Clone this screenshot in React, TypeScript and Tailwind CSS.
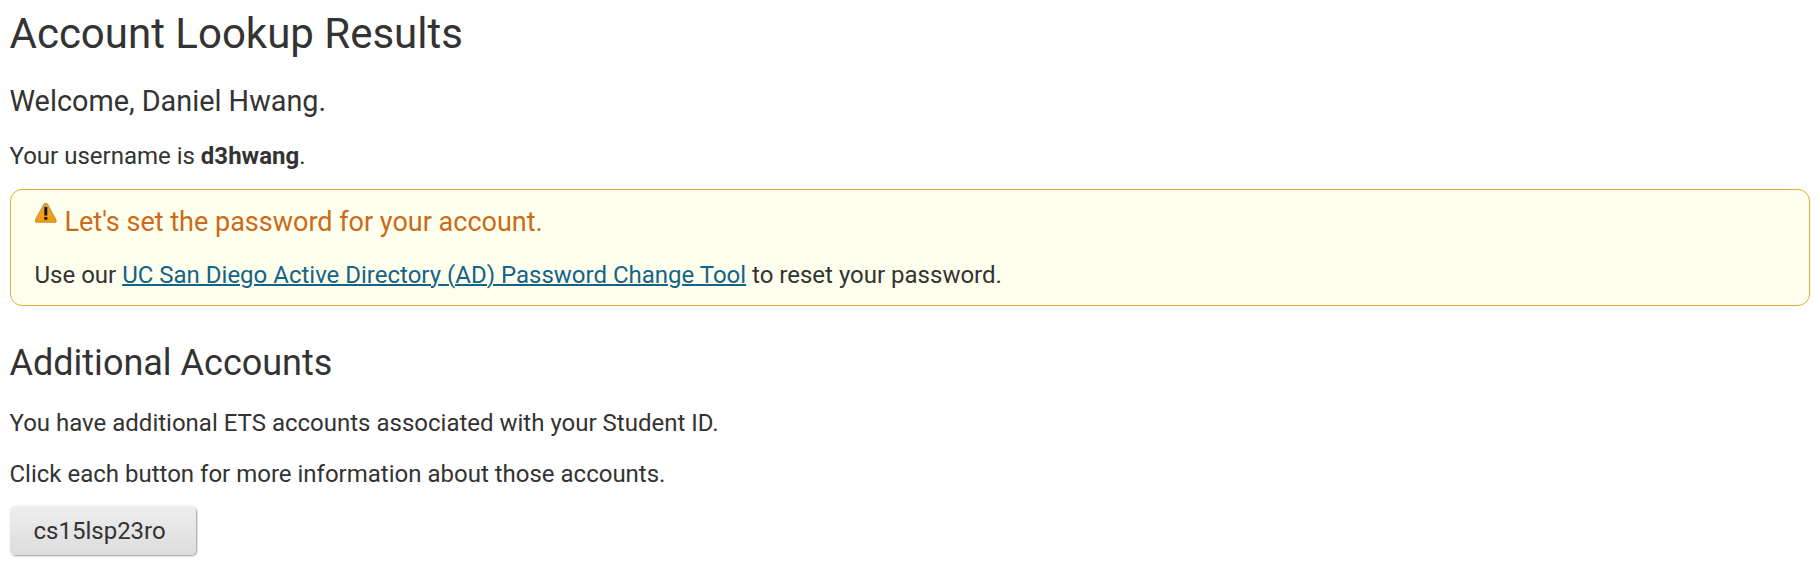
function WarningIcon() {
  return (
    <svg className="mr-[8px] h-[22px] w-[22px] shrink-0" viewBox="0 0 22 22" aria-hidden="true">
      <defs>
        <linearGradient id="amber" x1="0" y1="0" x2="0" y2="1">
          <stop offset="0" stopColor="#dda04a" />
          <stop offset="0.5" stopColor="#eca224" />
          <stop offset="1" stopColor="#f59a0a" />
        </linearGradient>
      </defs>
      <path
        d="M9 .9Q10.7-.5 12.4.9L21 16.8V19.2H.4V16.8Z"
        fill="url(#amber)"
        stroke="#c48430"
        strokeWidth="0.9"
        strokeLinejoin="round"
      />
      <path d="M9.3 4h3v8.5h-3zM9.3 14h3v2.7h-3z" fill="#1d1606" />
    </svg>
  );
}

export default function App() {
  return (
    <main className="h-[573px] w-full bg-white pr-[9px] pl-[9.5px] font-[Roboto,sans-serif] text-[24px] leading-[34px] text-[#333]">
      <h1 className="pt-[10px] text-[42px] leading-[47px]">Account Lookup Results</h1>
      <p className="mt-[26px] text-[28.8px] leading-[36px]">Welcome, Daniel Hwang.</p>
      <p className="mt-[20px]">
        Your username is <b>d3hwang</b>.
      </p>
      <section className="mt-[16px] ml-[0.5px] h-[117px] rounded-[12px] border border-[#dfae36] bg-[#ffffee] pl-[23.5px]">
        <h3 className="flex pt-[13px] text-[27px] leading-[38px] text-[#cc6a18]">
          <WarningIcon />
          Let's set the password for your account.
        </h3>
        <p className="mt-[17px]">
          Use our{" "}
          <a href="#" className="text-[#136488] underline decoration-2">
            UC San Diego Active Directory (AD) Password Change Tool
          </a>{" "}
          to reset your password.
        </p>
      </section>
      <h2 className="mt-[37px] text-[36px] leading-[40px]">Additional Accounts</h2>
      <p className="mt-[23px]">You have additional ETS accounts associated with your Student ID.</p>
      <p className="mt-[17px]">Click each button for more information about those accounts.</p>
      <button className="mt-[15px] ml-[0.5px] block h-[49px] w-[186px] rounded-[5px] bg-linear-to-b from-[#eeeeee] to-[#dddddd] pl-[23.5px] text-left shadow-[1px_1px_2px_rgba(0,0,0,0.4)]">
        cs15lsp23ro
      </button>
    </main>
  );
}
